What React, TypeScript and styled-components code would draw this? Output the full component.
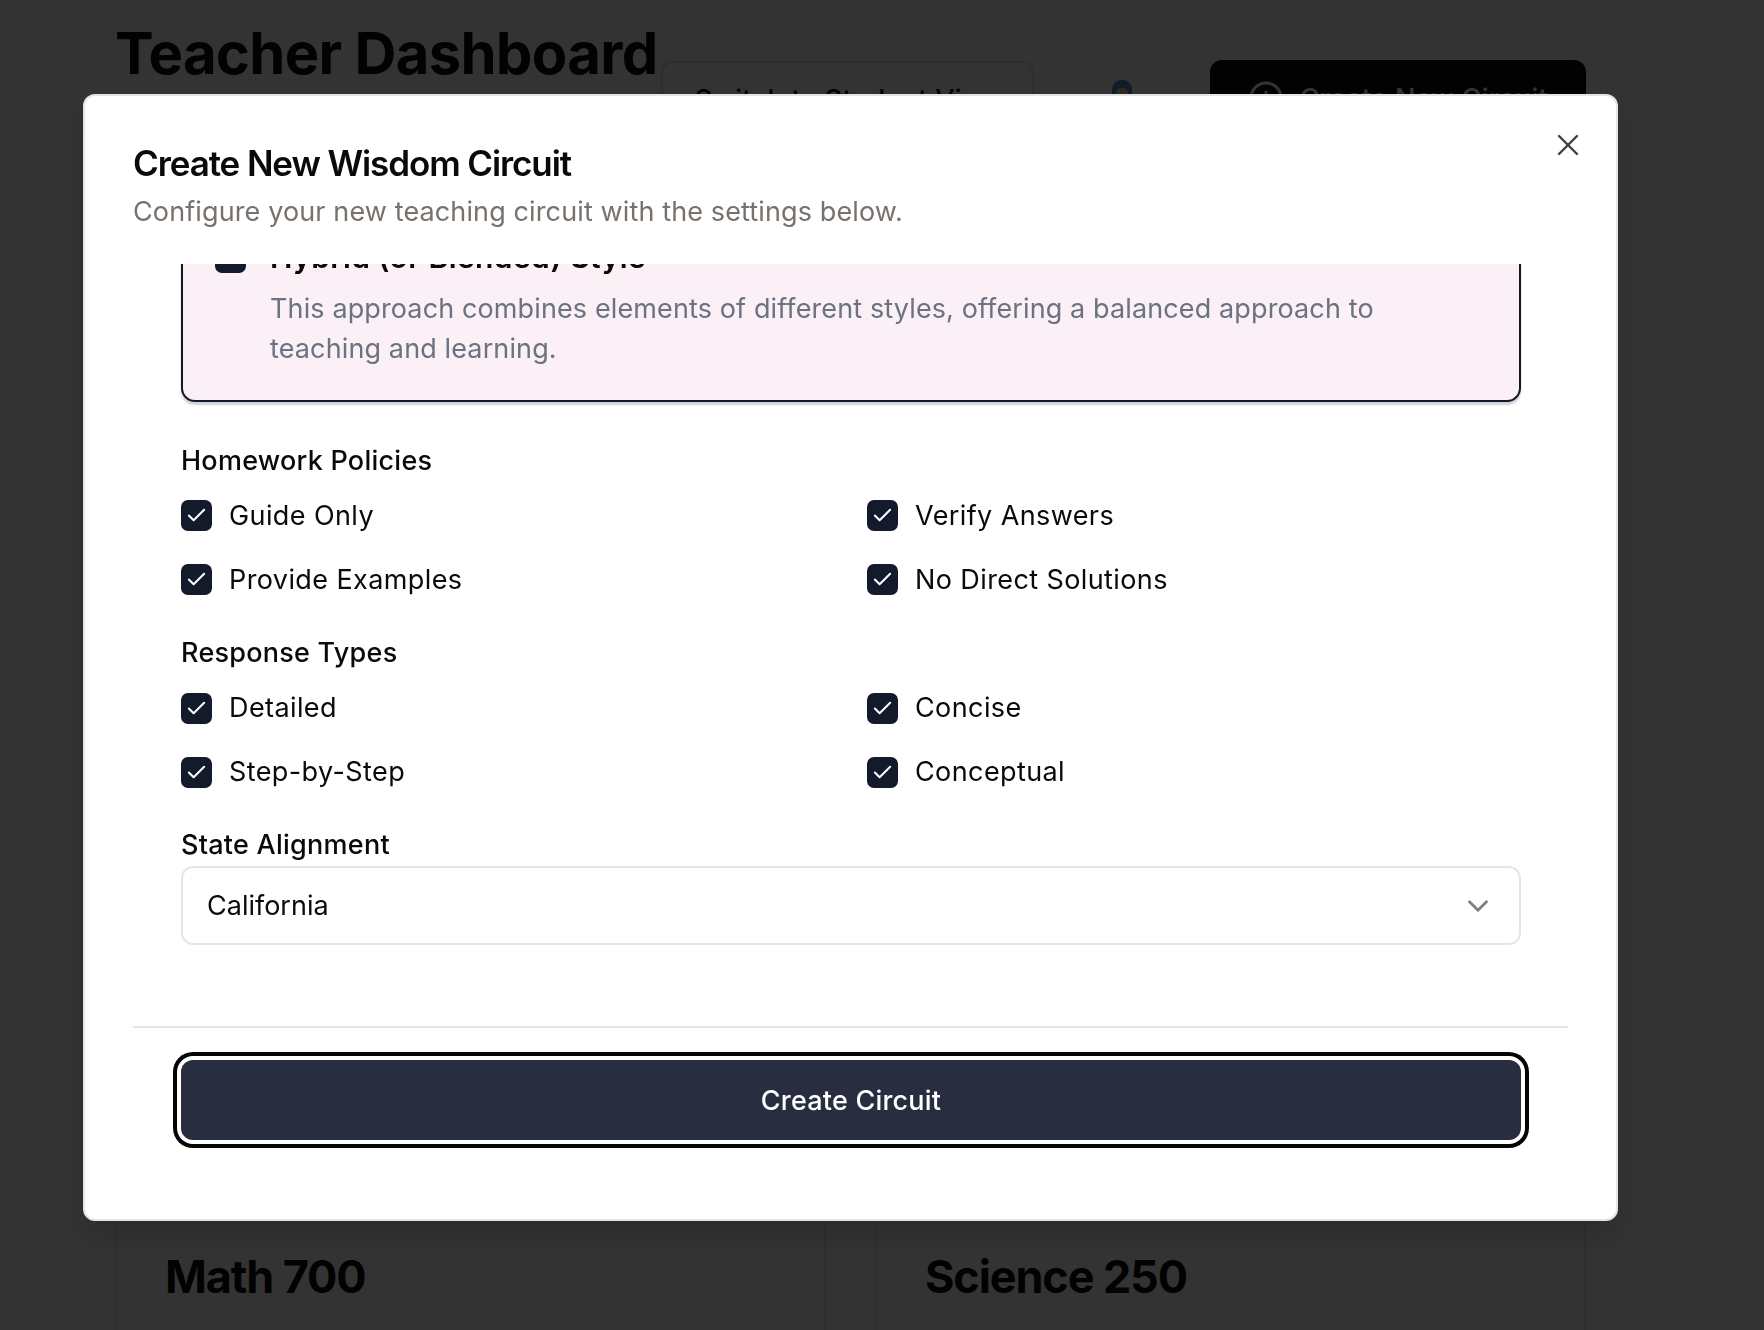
import React, { useLayoutEffect, useRef } from "react";
import styled, { createGlobalStyle } from "styled-components";
import { Check, X, ChevronDown, PlusCircle } from "lucide-react";

const GlobalStyle = createGlobalStyle`
  html, body { margin: 0; padding: 0; background: #ffffff; }
  body {
    font-family: Inter, "Noto Sans", "Liberation Sans", sans-serif;
    color: #0a0a0a;
    -webkit-font-smoothing: antialiased;
  }
  * { box-sizing: border-box; }
`;

/* ---------- background dashboard ---------- */

const Page = styled.div`
  width: 1764px;
  height: 1330px;
  overflow: hidden;
  padding: 24px 0 0 115px;
`;

const Container = styled.div`
  width: 1471px;
`;

const Header = styled.header`
  display: flex;
  align-items: flex-start;
  justify-content: space-between;
  white-space: nowrap;
`;

const PageTitle = styled.h1`
  flex: none;
  margin: 0;
  font-size: 58px;
  line-height: 1;
  font-weight: 700;
  letter-spacing: -0.7px;
  color: #0a0a0a;
`;

const Actions = styled.div`
  flex: none;
  display: flex;
  align-items: flex-start;
  gap: 64px;
  margin-top: 37px;
`;

const HeaderButton = styled.button<{ $dark?: boolean }>`
  flex: none;
  height: 76px;
  display: flex;
  align-items: center;
  gap: 16px;
  padding: 0 ${(p) => (p.$dark ? 36 : 31.5)}px;
  border-radius: 12px;
  font-family: inherit;
  font-size: 27px;
  font-weight: 500;
  letter-spacing: 0.3px;
  white-space: nowrap;
  border: 2px solid ${(p) => (p.$dark ? "#0a0a0a" : "#e5e5e5")};
  background: ${(p) => (p.$dark ? "#0a0a0a" : "#ffffff")};
  color: ${(p) => (p.$dark ? "#ffffff" : "#0a0a0a")};
  margin-top: ${(p) => (p.$dark ? "-1px" : "0")};
`;

const Avatar = styled.div`
  width: 48px;
  height: 48px;
  display: flex;
  justify-content: center;
  padding-top: 19px;
`;

const CardGrid = styled.div`
  margin-top: 1063px;
  display: grid;
  grid-template-columns: 711px 711px;
  column-gap: 49px;
`;

const ClassCard = styled.div`
  border: 2px solid #e5e5e5;
  border-radius: 12px;
  padding: 48px;
  height: 260px;
`;

const ClassName = styled.h3`
  margin: 0;
  font-size: 45px;
  line-height: 54px;
  font-weight: 700;
  letter-spacing: -0.025em;
`;

const Overlay = styled.div`
  position: fixed;
  inset: 0;
  background: rgba(0, 0, 0, 0.8);
`;

/* ---------- modal ---------- */

const Modal = styled.div`
  position: fixed;
  left: 83px;
  top: 94px;
  width: 1535px;
  height: 1127px;
  background: #ffffff;
  border: 2px solid #e5e5e5;
  border-radius: 12px;
  padding: 48px;
  display: flex;
  flex-direction: column;
  box-shadow: 0 15px 30px rgba(0, 0, 0, 0.15);
`;

const CloseButton = styled.button`
  position: absolute;
  right: 30px;
  top: 31px;
  width: 36px;
  height: 36px;
  padding: 0;
  border: none;
  background: transparent;
  color: #3f3f46;
  display: flex;
  align-items: center;
  justify-content: center;
`;

const ModalHeader = styled.div`
  margin-bottom: 31px;
`;

const ModalTitle = styled.h2`
  margin: 0;
  font-size: 35px;
  line-height: 38px;
  font-weight: 600;
  letter-spacing: -1.1px;
  color: #0a0a0a;
`;

const ModalSubtitle = styled.p`
  margin: 10px 0 0;
  font-size: 27px;
  line-height: 40.5px;
  letter-spacing: 0.12px;
  color: #78716c;
`;

const ScrollArea = styled.div`
  flex: 1;
  min-height: 0;
  padding: 0 47px 81px 48px;
  overflow-y: auto;
  scrollbar-width: none;
  &::-webkit-scrollbar { display: none; }
`;

const Section = styled.section<{ $gap?: number }>`
  margin-top: ${(p) => p.$gap ?? 33}px;
`;

const SectionLabel = styled.div<{ $mb?: number }>`
  font-size: 27px;
  line-height: 39px;
  font-weight: 500;
  letter-spacing: 0.25px;
  color: #0a0a0a;
  margin-bottom: ${(p) => p.$mb ?? 15.5}px;
`;

const TextInput = styled.div`
  height: 79px;
  border: 2px solid #e5e5e5;
  border-radius: 12px;
  padding: 0 24px;
  display: flex;
  align-items: center;
  font-size: 27px;
  color: #0a0a0a;
`;

const StyleList = styled.div`
  display: flex;
  flex-direction: column;
  gap: 24px;
`;

const StyleCard = styled.div<{ $selected?: boolean }>`
  border: 2px solid ${(p) => (p.$selected ? "#111827" : "#e5e5e5")};
  background: ${(p) => (p.$selected ? "#faf0f6" : "#ffffff")};
  border-radius: 14px;
  padding: 32px 32px 31px;
  display: flex;
  align-items: flex-start;
  gap: 24px;
  box-shadow: ${(p) =>
    p.$selected ? "0 3px 2px rgba(17, 24, 39, 0.2)" : "none"};
`;

const StyleText = styled.div`
  flex: 1;
  max-width: 1160px;
`;

const StyleTitle = styled.div`
  font-size: 30px;
  line-height: 42px;
  font-weight: 600;
  letter-spacing: 0.4px;
  color: #0a0a0a;
`;

const StyleDesc = styled.div`
  margin-top: 11px;
  font-size: 27px;
  line-height: 40px;
  letter-spacing: 0.12px;
  color: #6b7280;
`;

const Box = styled.span<{ $checked?: boolean; $mt?: number }>`
  flex: none;
  width: 31px;
  height: 31px;
  border-radius: 7px;
  margin-top: ${(p) => p.$mt ?? 0}px;
  background: ${(p) => (p.$checked ? "#131a2b" : "#ffffff")};
  border: 2px solid #131a2b;
  display: flex;
  align-items: center;
  justify-content: center;
  color: #ffffff;
`;

const OptionGrid = styled.div`
  display: grid;
  grid-template-columns: 1fr 1fr;
  column-gap: 32px;
  row-gap: 23.5px;
`;

const Option = styled.label`
  display: flex;
  align-items: center;
  gap: 17px;
  font-size: 27px;
  line-height: 40.5px;
  letter-spacing: 0.4px;
  color: #0a0a0a;
`;

const Select = styled.div`
  height: 79px;
  border: 2px solid #e5e5e5;
  border-radius: 12px;
  padding: 0 24px;
  display: flex;
  align-items: center;
  justify-content: space-between;
  font-size: 27px;
  color: #0a0a0a;
`;

const Footer = styled.div`
  border-top: 2px solid #e5e5e5;
  padding: 32px 47px 31px 48px;
`;

const SubmitButton = styled.button`
  width: 100%;
  height: 80px;
  border: none;
  border-radius: 12px;
  background: #282e3f;
  color: #ffffff;
  font-family: inherit;
  font-size: 27px;
  font-weight: 500;
  letter-spacing: 0.2px;
  box-shadow: 0 0 0 4px #ffffff, 0 0 0 8px #050505;
`;

function Checkbox({ checked = true, mt }: { checked?: boolean; mt?: number }) {
  return (
    <Box $checked={checked} $mt={mt}>
      {checked && <Check size={23} strokeWidth={2.1} />}
    </Box>
  );
}

const styles = [
  {
    title: "Socratic Method",
    desc: "Guides students through questioning, encouraging critical thinking and self-discovery of answers.",
  },
  {
    title: "Direct Instruction",
    desc: "Provides clear, structured explanations with explicit steps and worked examples for students to follow.",
  },
  {
    title: "Hybrid (or Blended) Style",
    desc: "This approach combines elements of different styles, offering a balanced approach to teaching and learning.",
    selected: true,
  },
];

const homework = ["Guide Only", "Verify Answers", "Provide Examples", "No Direct Solutions"];
const responses = ["Detailed", "Concise", "Step-by-Step", "Conceptual"];

export default function App() {
  const scrollRef = useRef<HTMLDivElement>(null);

  useLayoutEffect(() => {
    const el = scrollRef.current;
    if (el) el.scrollTop = el.scrollHeight;
  }, []);

  return (
    <>
      <GlobalStyle />
      <Page>
        <Container>
          <Header>
            <PageTitle>Teacher Dashboard</PageTitle>
            <Actions>
              <HeaderButton>Switch to Student View</HeaderButton>
              <Avatar>
                <svg width="24" height="30" viewBox="0 0 24 30">
                  <rect x="2" y="0" width="20" height="30" rx="9" fill="#5b88c9" />
                  <rect x="6" y="8" width="12" height="14" rx="5" fill="#f2c9a0" />
                </svg>
              </Avatar>
              <HeaderButton $dark>
                <PlusCircle size={36} strokeWidth={2} />
                Create New Circuit
              </HeaderButton>
            </Actions>
          </Header>
          <CardGrid>
            <ClassCard>
              <ClassName>Math 700</ClassName>
            </ClassCard>
            <ClassCard>
              <ClassName>Science 250</ClassName>
            </ClassCard>
          </CardGrid>
        </Container>
      </Page>
      <Overlay />
      <Modal role="dialog">
        <ModalHeader>
          <ModalTitle>Create New Wisdom Circuit</ModalTitle>
          <ModalSubtitle>Configure your new teaching circuit with the settings below.</ModalSubtitle>
        </ModalHeader>
        <ScrollArea ref={scrollRef}>
          <Section $gap={0}>
            <SectionLabel>Circuit Name</SectionLabel>
            <TextInput>Algebra Foundations</TextInput>
          </Section>
          <Section>
            <SectionLabel>Teaching Style</SectionLabel>
            <StyleList>
              {styles.map((s) => (
                <StyleCard key={s.title} $selected={s.selected}>
                  <Checkbox checked={!!s.selected} mt={6} />
                  <StyleText>
                    <StyleTitle>{s.title}</StyleTitle>
                    <StyleDesc>{s.desc}</StyleDesc>
                  </StyleText>
                </StyleCard>
              ))}
            </StyleList>
          </Section>
          <Section $gap={39.5}>
            <SectionLabel>Homework Policies</SectionLabel>
            <OptionGrid>
              {homework.map((h) => (
                <Option key={h}>
                  <Checkbox />
                  {h}
                </Option>
              ))}
            </OptionGrid>
          </Section>
          <Section>
            <SectionLabel $mb={16}>Response Types</SectionLabel>
            <OptionGrid>
              {responses.map((r) => (
                <Option key={r}>
                  <Checkbox />
                  {r}
                </Option>
              ))}
            </OptionGrid>
          </Section>
          <Section $gap={32}>
            <SectionLabel $mb={2.5}>State Alignment</SectionLabel>
            <Select>
              California
              <ChevronDown size={34} strokeWidth={2} color="#808080" />
            </Select>
          </Section>
        </ScrollArea>
        <Footer>
          <SubmitButton>Create Circuit</SubmitButton>
        </Footer>
        <CloseButton aria-label="Close">
          <X size={36} strokeWidth={1.6} />
        </CloseButton>
      </Modal>
    </>
  );
}
